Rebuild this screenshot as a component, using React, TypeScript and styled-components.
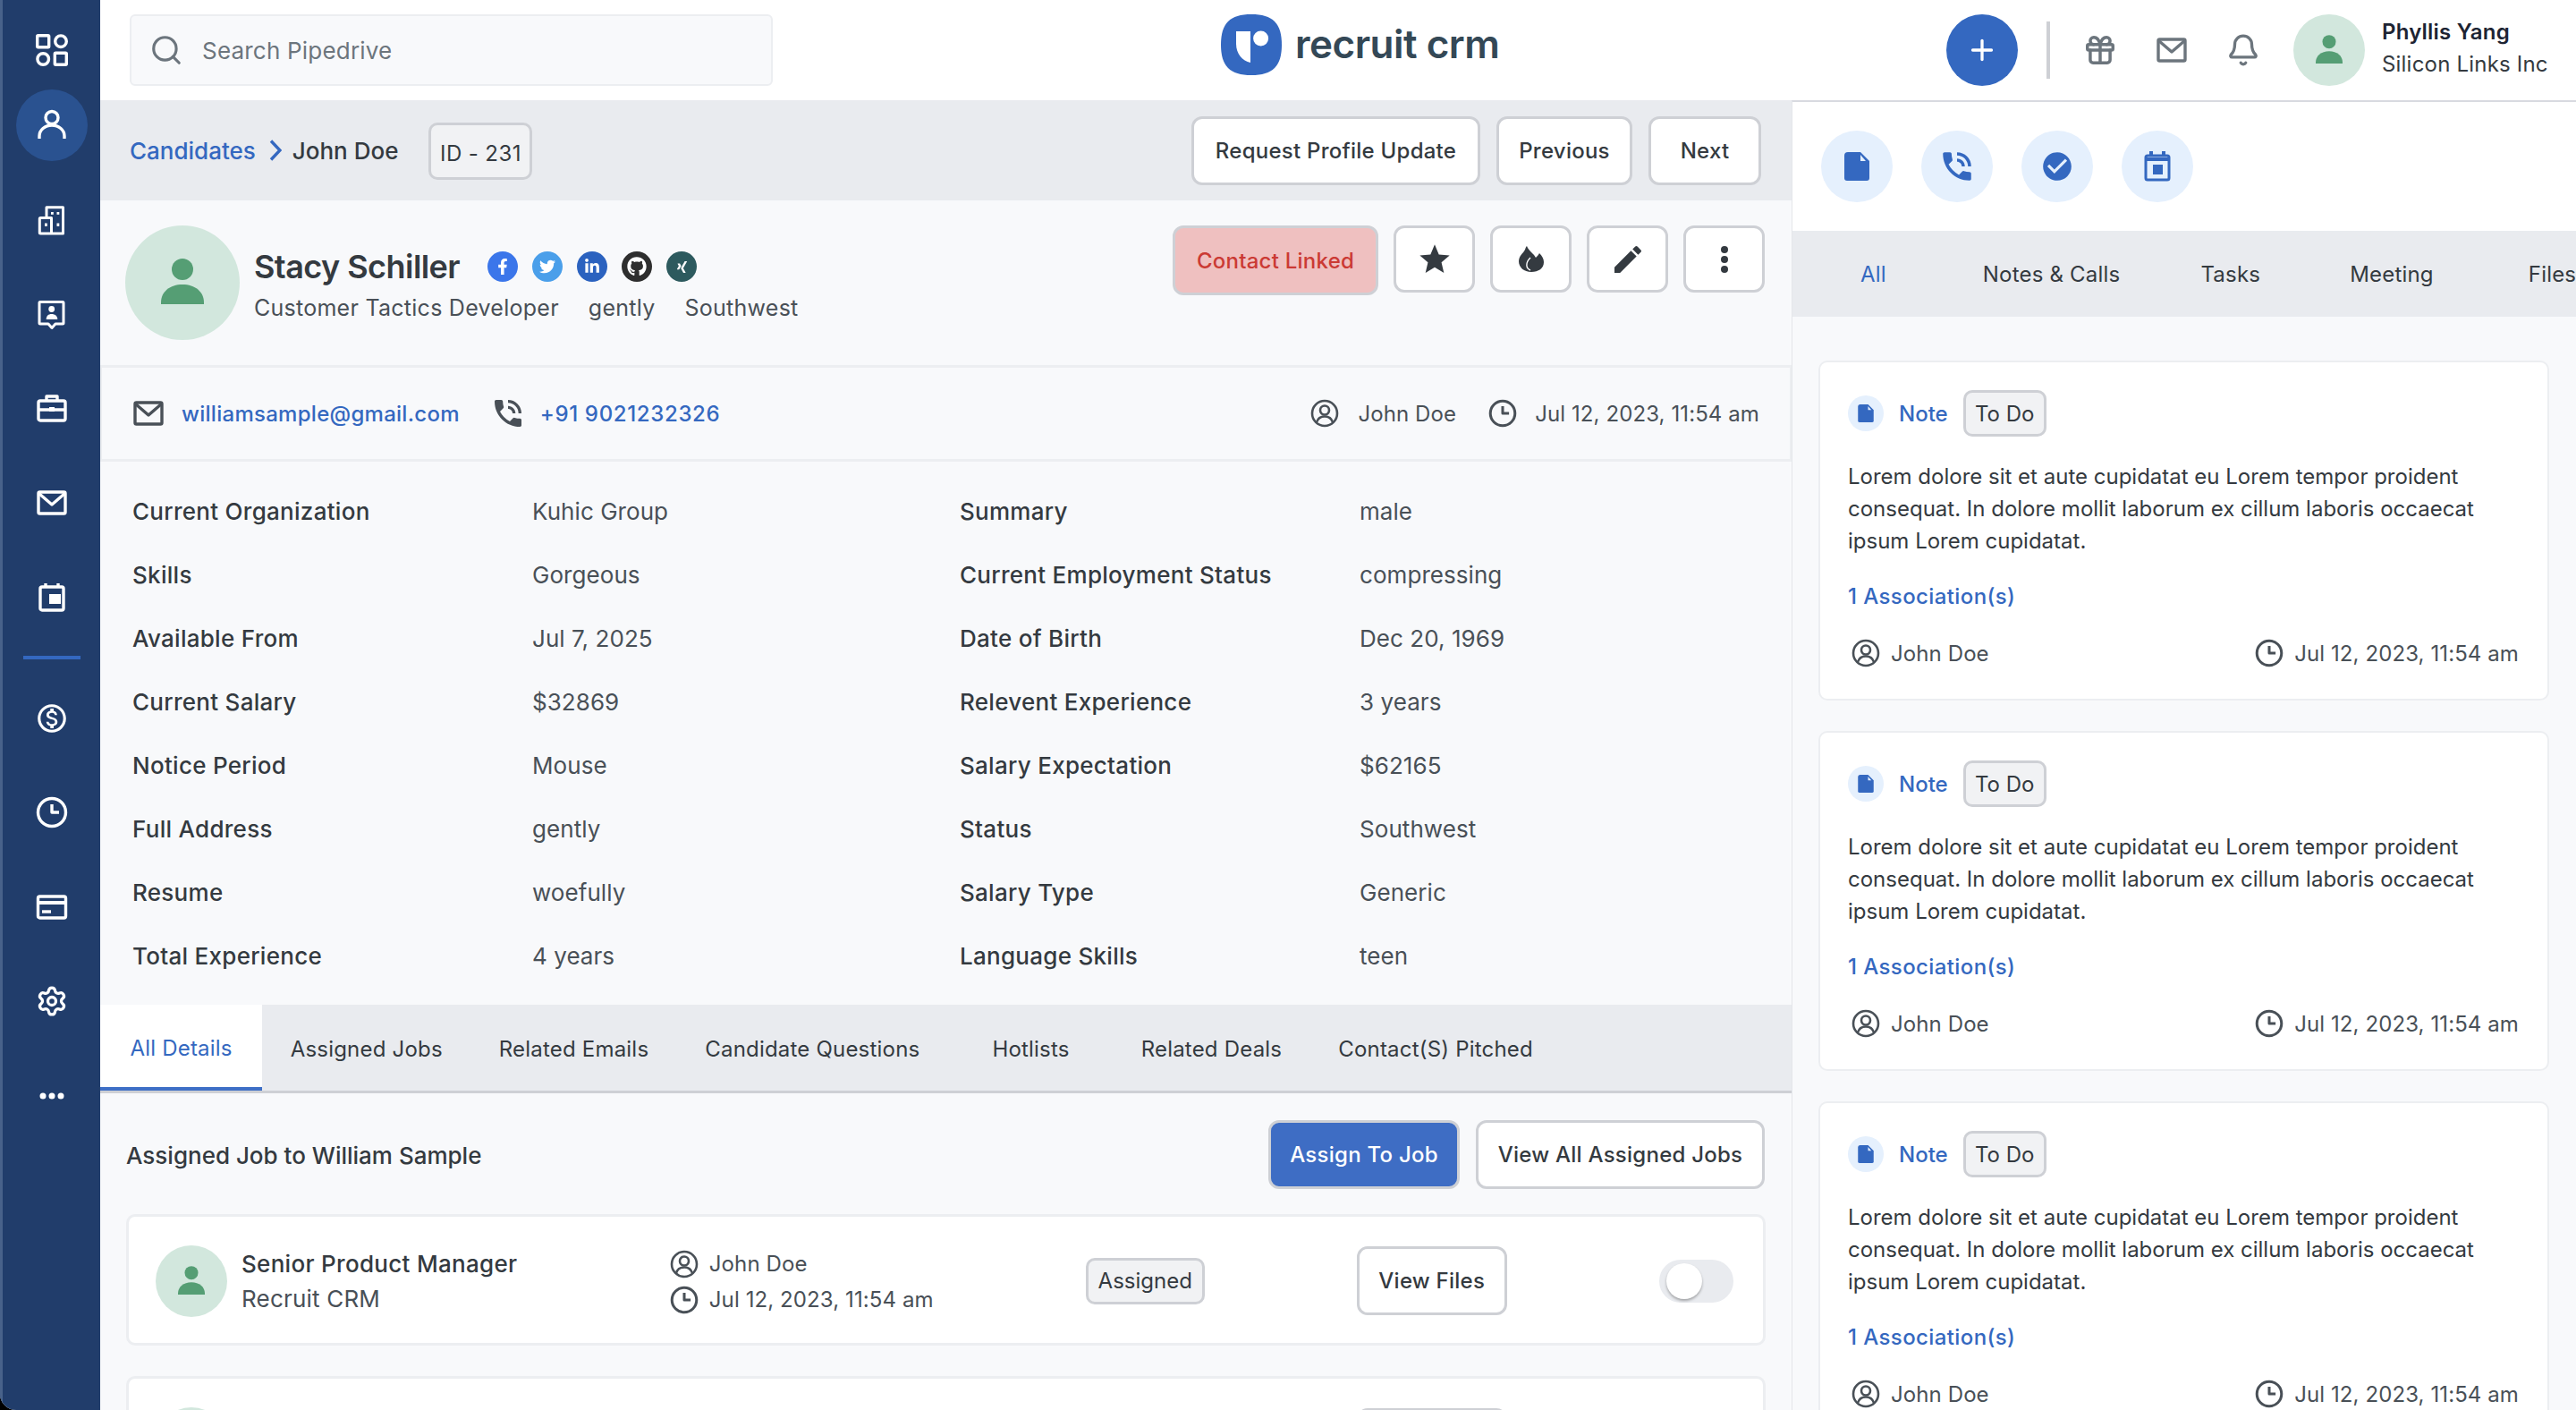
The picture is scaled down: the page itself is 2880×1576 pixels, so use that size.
import React from 'react';
import styled, { createGlobalStyle } from 'styled-components';
import { Search, Plus, Gift, Bell, Settings } from 'lucide-react';
import { FaFacebookF, FaTwitter, FaLinkedinIn, FaGithub, FaXing } from 'react-icons/fa';
import { MdPhoneInTalk, MdCheckCircle, MdOutlineMonetizationOn, MdStar, MdEdit } from 'react-icons/md';

const GlobalStyle = createGlobalStyle`
  html, body { margin: 0; padding: 0; background: #000; }
  * { box-sizing: border-box; }
  body { font-family: Inter, "Liberation Sans", sans-serif; color: #343a40; font-size: 24px; }
`;

const Page = styled.div`
  width: 2880px;
  height: 1576px;
  display: flex;
  overflow: hidden;
  background: #f8f9fb;
  border-bottom-left-radius: 18px;
`;

const Sidebar = styled.nav`
  width: 112px;
  flex-shrink: 0;
  padding-top: 16px;
  display: flex;
  flex-direction: column;
  align-items: center;
  gap: 25.5px;
  background: #213d6b;
  border-left: 3px solid #48628a;
  color: #fff;
`;

const NavItem = styled.div<{ $active?: boolean; $tight?: boolean }>`
  width: 80px;
  height: 80px;
  flex-shrink: 0;
  border-radius: 50%;
  display: flex;
  align-items: center;
  justify-content: center;
  background: ${(p) => (p.$active ? '#2a5290' : 'transparent')};
  margin-top: ${(p) => (p.$tight ? '-21.5px' : '0')};
`;

const NavDivider = styled.div`
  width: 64px;
  height: 4px;
  flex-shrink: 0;
  background: #3468c0;
`;

const Main = styled.div`
  flex: 1;
  min-width: 0;
  display: flex;
  flex-direction: column;
`;

const TopBar = styled.header`
  height: 112px;
  flex-shrink: 0;
  padding-left: 33px;
  display: flex;
  align-items: center;
  background: #fff;
`;

const SearchBox = styled.div`
  width: 719px;
  height: 80px;
  padding-left: 20px;
  display: flex;
  align-items: center;
  gap: 21px;
  background: #f8f9fb;
  border: 2px solid #eceef1;
  border-radius: 6px;
  color: #6c757d;
  font-size: 26px;
  letter-spacing: 0.2px;
`;

const Logo = styled.div`
  margin: 0 0 12px 501px;
  display: flex;
  align-items: center;
  gap: 15px;
`;

const LogoText = styled.span`
  margin-top: -2px;
  font-size: 44px;
  font-weight: 600;
  color: #344856;
  letter-spacing: -0.5px;
`;

const TopActions = styled.div`
  margin-left: auto;
  display: flex;
  align-items: center;
`;

const AddButton = styled.div`
  width: 80px;
  height: 80px;
  border-radius: 50%;
  background: #3468c0;
  color: #fff;
  display: flex;
  align-items: center;
  justify-content: center;
`;

const TopDivider = styled.div`
  width: 4px;
  height: 64px;
  margin: 0 16px 0 32px;
  background: #ced0d5;
`;

const TopIcon = styled.div`
  width: 80px;
  height: 80px;
  display: flex;
  align-items: center;
  justify-content: center;
  color: #6c757d;
`;

const UserBox = styled.div`
  margin-left: 16px;
  width: 316px;
  display: flex;
  align-items: center;
  gap: 19px;
`;

const UserText = styled.div`
  margin-top: -4px;
  display: flex;
  flex-direction: column;
  gap: 10px;
  line-height: 26px;
  letter-spacing: 0.2px;
`;

const UserName = styled.span`
  font-weight: 600;
  color: #1d2433;
`;

const AvatarCircle = styled.div<{ $size: number }>`
  width: ${(p) => p.$size}px;
  height: ${(p) => p.$size}px;
  flex-shrink: 0;
  border-radius: 50%;
  background: #d2e7dd;
`;

const Columns = styled.div`
  flex: 1;
  min-height: 0;
  display: flex;
`;

const LeftPanel = styled.section`
  width: 1891px;
  flex-shrink: 0;
  overflow: hidden;
  background: #f8f9fb;
`;

const CrumbBar = styled.div`
  height: 112px;
  padding: 0 33px;
  display: flex;
  align-items: center;
  background: #e9ebef;
`;

const Crumb = styled.a`
  color: #3468c0;
  font-weight: 500;
  font-size: 26px;
`;

const CrumbCurrent = styled.span`
  font-weight: 500;
  font-size: 26px;
`;

const CrumbChevron = styled.svg`
  margin: 0 12px 0 15px;
  color: #3468c0;
`;

const IdPill = styled.div`
  width: 116px;
  height: 64px;
  margin: 2px 0 0 34px;
  padding-top: 4px;
  display: flex;
  align-items: center;
  justify-content: center;
  border: 3px solid #ced0d5;
  border-radius: 10px;
  background: #f1f2f4;
  white-space: nowrap;
  letter-spacing: 0.4px;
`;

const CrumbActions = styled.div`
  margin-left: auto;
  margin-right: 1px;
  display: flex;
  gap: 18px;
`;

const Button = styled.button<{ $w: number; $h?: number; $primary?: boolean; $danger?: boolean }>`
  width: ${(p) => p.$w}px;
  height: ${(p) => p.$h ?? 77}px;
  flex-shrink: 0;
  padding: 0;
  display: flex;
  align-items: center;
  justify-content: center;
  font: 500 24px Inter, sans-serif;
  letter-spacing: 0.25px;
  border: 3px solid #ced0d5;
  border-radius: 12px;
  color: ${(p) => (p.$primary ? '#fff' : p.$danger ? '#cb3a34' : '#343a40')};
  background: ${(p) => (p.$primary ? '#3e6dc4' : p.$danger ? '#efc0c0' : '#fff')};
`;

const FilesButton = styled(Button)`
  margin-left: 170px;
`;

const ProfileRow = styled.div`
  height: 184px;
  padding: 28px 30px 0 28px;
  display: flex;
`;

const ProfileInfo = styled.div`
  margin-left: 16px;
  flex: 1;
`;

const NameLine = styled.div`
  height: 44px;
  margin-top: 24px;
  display: flex;
  align-items: center;
  gap: 16px;
`;

const Name = styled.h1`
  margin: 0 15px 0 0;
  font-size: 36px;
  font-weight: 600;
  letter-spacing: -0.55px;
`;

const Social = styled.span<{ $bg: string }>`
  width: 34px;
  height: 34px;
  border-radius: 50%;
  display: flex;
  align-items: center;
  justify-content: center;
  color: #fff;
  font-size: 18px;
  background: ${(p) => p.$bg};
`;

const SubLine = styled.div`
  margin-top: 9px;
  display: flex;
  gap: 33px;
  font-size: 25px;
  letter-spacing: 0.26px;
  color: #495057;
`;

const ProfileActions = styled.div`
  display: flex;
  align-items: flex-start;
  gap: 17px;
`;

const ContactRow = styled.div`
  height: 108px;
  padding: 0 34px 0 34px;
  display: flex;
  align-items: center;
  border: 3px solid #eceef1;
  border-right-width: 2px;
  border-left-width: 2px;
`;

const ContactItem = styled.div<{ $gap: number; $push?: boolean; $after?: number }>`
  display: flex;
  align-items: center;
  gap: ${(p) => p.$gap}px;
  margin-right: ${(p) => p.$after ?? 36}px;
  color: #495057;
  letter-spacing: 0.1px;
  margin-left: ${(p) => (p.$push ? 'auto' : '0')};
  &:last-child { margin-right: 0; }
`;

const ContactLink = styled.a<{ $tracking: number }>`
  color: #3468c0;
  font-weight: 500;
  letter-spacing: ${(p) => p.$tracking}px;
`;

const DetailGrid = styled.div`
  padding: 20px 0 19px 36px;
  display: grid;
  grid-template-columns: 447px 478px 447px 1fr;
  grid-auto-rows: 71px;
  align-items: center;
`;

const DetailLabel = styled.div`
  font-weight: 500;
  font-size: 26px;
  letter-spacing: 0.28px;
`;

const DetailValue = styled.div`
  color: #495057;
  font-size: 26px;
  letter-spacing: 0.06px;
`;

const TabBar = styled.div`
  height: 99px;
  display: flex;
  background: #e9ebef;
  border-bottom: 3px solid #ced0d5;
`;

const Tab = styled.div<{ $active?: boolean; $wide?: boolean }>`
  height: 96px;
  padding: ${(p) => (p.$active ? '4px 33.5px 0' : '2px 31.5px 0')};
  margin: ${(p) => (p.$wide ? '0 17px 0 18px' : '0')};
  display: flex;
  align-items: center;
  white-space: nowrap;
  font-size: 24px;
  letter-spacing: 0.2px;
  color: ${(p) => (p.$active ? '#3468c0' : '#343a40')};
  background: ${(p) => (p.$active ? '#fff' : 'transparent')};
  border-bottom: ${(p) => (p.$active ? '4px solid #3e6fc6' : 'none')};
`;

const SectionHead = styled.div`
  padding: 30px 30px 0 29px;
  display: flex;
  align-items: center;
`;

const SectionTitle = styled.div`
  font-weight: 500;
  font-size: 26px;
  margin-top: 1px;
`;

const SectionActions = styled.div`
  margin-left: auto;
  display: flex;
  gap: 18px;
`;

const JobCard = styled.div`
  height: 147px;
  margin: 28px 29px 34px 29px;
  padding: 2px 33px 0 30px;
  display: flex;
  align-items: center;
  background: #fff;
  border: 3px solid #eceef1;
  border-radius: 10px;
`;

const JobTitleBox = styled.div`
  width: 484px;
  margin-left: 16px;
  display: flex;
  flex-direction: column;
  gap: 12px;
  line-height: 27px;
`;

const JobTitle = styled.span`
  font-weight: 500;
  font-size: 26px;
  letter-spacing: 0.3px;
`;

const JobCompany = styled.span`
  color: #495057;
  font-size: 26px;
  letter-spacing: 0.2px;
`;

const JobMeta = styled.div`
  width: 470px;
  margin-top: 2px;
  display: flex;
  flex-direction: column;
  gap: 8px;
  color: #495057;
`;

const MetaLine = styled.div`
  display: flex;
  align-items: center;
  gap: 12px;
  letter-spacing: 0.1px;
`;

const StatusPill = styled.div<{ $w: number; $h: number }>`
  width: ${(p) => p.$w}px;
  height: ${(p) => p.$h}px;
  flex-shrink: 0;
  display: flex;
  align-items: center;
  justify-content: center;
  background: #f1f2f4;
  border: 3px solid #ced0d5;
  border-radius: 10px;
`;

const Toggle = styled.div`
  width: 84px;
  height: 48px;
  margin-left: 170px;
  padding: 4px 8px;
  border-radius: 24px;
  background: #e9ebef;
`;

const ToggleKnob = styled.div`
  width: 40px;
  height: 40px;
  border-radius: 50%;
  background: #fff;
  box-shadow: 0 2px 3px rgba(0, 0, 0, 0.3);
`;

const RightPanel = styled.aside`
  flex: 1;
  min-width: 0;
  overflow: hidden;
  border-top: 2px solid #d8dae0;
  border-left: 1px solid #e4e6ea;
  background: #f8f9fb;
`;

const QuickRow = styled.div`
  height: 144px;
  padding-left: 32px;
  display: flex;
  align-items: center;
  gap: 32px;
  background: #fff;
`;

const QuickIcon = styled.div<{ $size: number }>`
  width: ${(p) => p.$size}px;
  height: ${(p) => p.$size}px;
  flex-shrink: 0;
  border-radius: 50%;
  display: flex;
  align-items: center;
  justify-content: center;
  background: #e5f0fd;
  color: #3468c0;
`;

const ActivityTabs = styled.div`
  height: 96px;
  padding-left: 76px;
  display: flex;
  align-items: center;
  background: #e9ebef;
  white-space: nowrap;
  letter-spacing: 0.2px;
`;

const ActivityTab = styled.div<{ $right: number; $active?: boolean }>`
  margin-right: ${(p) => p.$right}px;
  color: ${(p) => (p.$active ? '#3468c0' : '#343a40')};
`;

const Feed = styled.div`
  padding: 49px 30px 0 29px;
  display: flex;
  flex-direction: column;
  gap: 34px;
`;

const NoteCard = styled.article`
  height: 380px;
  flex-shrink: 0;
  padding: 31px 32px 0 31px;
  background: #fff;
  border: 2px solid #eceef1;
  border-radius: 10px;
`;

const NoteHead = styled.div`
  display: flex;
  align-items: center;
`;

const NoteKind = styled.span`
  margin: 0 17px;
  color: #3468c0;
  font-weight: 500;
`;

const NoteBody = styled.p`
  margin: 27px 0 0;
  font-size: 24px;
  line-height: 36px;
  color: #343a40;
`;

const Association = styled.a`
  display: block;
  margin-top: 29px;
  color: #3468c0;
  font-weight: 500;
  letter-spacing: 0.4px;
`;

const NoteFoot = styled.div`
  margin-top: 33px;
  padding-left: 4px;
  display: flex;
  justify-content: space-between;
  color: #495057;
`;

const Glyph = ({ size = 36, children }: { size?: number; children: React.ReactNode }) => (
  <svg
    width={size}
    height={size}
    viewBox="0 0 36 36"
    fill="none"
    stroke="currentColor"
    strokeWidth="3.4"
    strokeLinejoin="round"
  >
    {children}
  </svg>
);

const GridIcon = () => (
  <Glyph>
    <rect x="1.7" y="1.7" width="13" height="13" rx="1" />
    <circle cx="28" cy="8.2" r="6.3" />
    <circle cx="8.2" cy="28" r="6.3" />
    <rect x="21.3" y="21.3" width="13" height="13" rx="1" />
  </Glyph>
);

const PersonIcon = () => (
  <Glyph>
    <circle cx="18" cy="9.5" r="7" />
    <path d="M4 33v-3a14 12 0 0 1 28 0v3" />
  </Glyph>
);

const BuildingIcon = () => (
  <svg width="36" height="36" viewBox="0 0 36 36" fill="none" stroke="currentColor" strokeWidth="3" strokeLinejoin="round">
    <path d="M12 15V3.7h18.5V33H5.3a1 1 0 0 1-1-1V16.5a1 1 0 0 1 1-1h12.2V33" />
    <g fill="currentColor" stroke="none">
      <rect x="17" y="9" width="2.8" height="2.8" />
      <rect x="23.5" y="9" width="2.8" height="2.8" />
      <rect x="23.5" y="21.5" width="2.8" height="3.4" />
      <rect x="10" y="21.5" width="2.8" height="3.4" />
    </g>
  </svg>
);

const ContactIcon = () => (
  <svg width="36" height="36" viewBox="0 0 36 36" fill="none" stroke="currentColor" strokeWidth="3" strokeLinejoin="round">
    <path d="M5 4.5h25a1 1 0 0 1 1 1V28a1 1 0 0 1-1 1h-8l-4 4.5L14 29H5a1 1 0 0 1-1-1V5.5a1 1 0 0 1 1-1z" />
    <circle cx="17.7" cy="12.5" r="3.4" fill="currentColor" stroke="none" />
    <path d="M11.7 24c0-4 2.5-6 6-6s6.6 2 6.6 6z" fill="currentColor" stroke="none" />
  </svg>
);

const BriefcaseIcon = () => (
  <Glyph>
    <rect x="3" y="9" width="30" height="22" rx="2" />
    <path d="M12 9V4h12v5M3 19h30" />
    <rect x="15" y="16" width="6" height="5" fill="currentColor" stroke="none" />
  </Glyph>
);

const MailIcon = ({ size = 36 }: { size?: number }) => (
  <Glyph size={size}>
    <rect x="3" y="6" width="30" height="24" rx="1.5" />
    <path d="M3.5 7.5 18 20 32.5 7.5" />
  </Glyph>
);

const CalendarIcon = () => (
  <Glyph>
    <rect x="5" y="6" width="26" height="26" rx="2" />
    <path d="M11 2v4M25 2v4" />
    <rect x="15" y="14" width="13" height="11" fill="currentColor" stroke="none" />
  </Glyph>
);

const ClockIcon = ({ size = 36 }: { size?: number }) => (
  <Glyph size={size}>
    <circle cx="18" cy="18" r="15.5" />
    <path d="M18 9v9h8" />
  </Glyph>
);

const CardIcon = () => (
  <Glyph>
    <rect x="2.5" y="6" width="31" height="24" rx="2" />
    <rect x="2.5" y="11" width="31" height="4" fill="currentColor" stroke="none" />
    <path d="M7 23h10" />
  </Glyph>
);

const DotsIcon = () => (
  <svg width="36" height="36" viewBox="0 0 36 36" fill="currentColor">
    <circle cx="8" cy="18" r="3.5" />
    <circle cx="18" cy="18" r="3.5" />
    <circle cx="28" cy="18" r="3.5" />
  </svg>
);

const DotsVertical = () => (
  <svg width="10" height="30" viewBox="0 0 10 30" fill="currentColor">
    <circle cx="5" cy="4" r="4" />
    <circle cx="5" cy="15" r="4" />
    <circle cx="5" cy="26" r="4" />
  </svg>
);

const FireIcon = () => (
  <svg width="28" height="29" viewBox="0 0 28 29">
    <path
      d="M14 29C6 29 0 24 0 17 0 11 5 8 7 4c.5-1.500 1-3 2-4 1 3 4 6 7 9 1.500 1.500 2.500 3 3 4 1-1 3-3 4-5 3 3 5 6 5 10 0 7-6 11-14 11z"
      fill="currentColor"
    />
    <path d="M13 27c-5-2-6-8 0-14" fill="none" stroke="#fff" strokeWidth="1.4" />
  </svg>
);

const OwnerIcon = ({ size = 32 }: { size?: number }) => (
  <svg width={size} height={size} viewBox="0 0 32 32" fill="none" stroke="#495057" strokeWidth="2.6">
    <circle cx="16" cy="16" r="14" />
    <circle cx="16" cy="12.5" r="5" />
    <path d="M7 26c1.5-5 5-6.5 9-6.5s7.5 1.5 9 6.5" />
  </svg>
);

const DocIcon = ({ size = 32 }: { size?: number }) => (
  <svg width={size} height={size} viewBox="0 0 32 32" fill="currentColor">
    <path d="M6 0h14l10 10v19a3 3 0 0 1-3 3H5a3 3 0 0 1-3-3V4a4 4 0 0 1 4-4z" />
    <path d="M20 3v7h6z" fill="#e5f0fd" />
  </svg>
);

const BlueCalendar = () => (
  <svg width="32" height="34" viewBox="0 0 32 34" fill="none" stroke="currentColor" strokeWidth="3">
    <rect x="3" y="5" width="26" height="27" rx="2" />
    <path d="M3 9h26M9 0v6M23 0v6" strokeWidth="4" />
    <rect x="11" y="15" width="11" height="11" fill="currentColor" stroke="none" />
  </svg>
);

const AvatarImage = ({ size }: { size: number }) => (
  <AvatarCircle $size={size}>
    <svg width={size} height={size} viewBox="0 0 128 128" fill="#559e74">
      <ellipse cx="64" cy="49" rx="12" ry="12" />
      <path d="M40 88v-2c0-12 10-20 24-20s24 8 24 20v2z" />
    </svg>
  </AvatarCircle>
);

const LogoMark = () => (
  <svg width="68" height="68" viewBox="0 0 68 68">
    <path d="M34 0C58 0 68 10 68 34S58 68 34 68 0 58 0 34 10 0 34 0z" fill="#3468c0" />
    <path d="M17 19h16v35C24 52 17 44 17 33z" fill="#fff" />
    <circle cx="44.600" cy="27" r="8.500" fill="#fff" />
  </svg>
);

const details = [
  ['Current Organization', 'Kuhic Group', 'Summary', 'male'],
  ['Skills', 'Gorgeous', 'Current Employment Status', 'compressing'],
  ['Available From', 'Jul 7, 2025', 'Date of Birth', 'Dec 20, 1969'],
  ['Current Salary', '$32869', 'Relevent Experience', '3 years'],
  ['Notice Period', 'Mouse', 'Salary Expectation', '$62165'],
  ['Full Address', 'gently', 'Status', 'Southwest'],
  ['Resume', 'woefully', 'Salary Type', 'Generic'],
  ['Total Experience', '4 years', 'Language Skills', 'teen'],
];

const tabs = ['Assigned Jobs', 'Related Emails', 'Candidate Questions', 'Hotlists', 'Related Deals', 'Contact(S) Pitched'];

const App = () => (
  <Page>
    <GlobalStyle />
    <Sidebar>
      <NavItem><GridIcon /></NavItem>
      <NavItem $active $tight><PersonIcon /></NavItem>
      <NavItem><BuildingIcon /></NavItem>
      <NavItem><ContactIcon /></NavItem>
      <NavItem><BriefcaseIcon /></NavItem>
      <NavItem><MailIcon /></NavItem>
      <NavItem><CalendarIcon /></NavItem>
      <NavDivider />
      <NavItem><MdOutlineMonetizationOn size={38} /></NavItem>
      <NavItem><ClockIcon /></NavItem>
      <NavItem><CardIcon /></NavItem>
      <NavItem><Settings size={36} strokeWidth={2.2} /></NavItem>
      <NavItem><DotsIcon /></NavItem>
    </Sidebar>
    <Main>
      <TopBar>
        <SearchBox>
          <Search size={38} strokeWidth={2} />
          Search Pipedrive
        </SearchBox>
        <Logo>
          <LogoMark />
          <LogoText>recruit crm</LogoText>
        </Logo>
        <TopActions>
          <AddButton><Plus size={36} strokeWidth={2.2} /></AddButton>
          <TopDivider />
          <TopIcon><Gift size={38} strokeWidth={2.2} /></TopIcon>
          <TopIcon><MailIcon size={36} /></TopIcon>
          <TopIcon><Bell size={38} strokeWidth={2.1} /></TopIcon>
          <UserBox>
            <AvatarImage size={80} />
            <UserText>
              <UserName>Phyllis Yang</UserName>
              <span>Silicon Links Inc</span>
            </UserText>
          </UserBox>
        </TopActions>
      </TopBar>
      <Columns>
        <LeftPanel>
          <CrumbBar>
            <Crumb>Candidates</Crumb>
            <CrumbChevron width="14" height="24" viewBox="0 0 14 24" fill="none" stroke="currentColor" strokeWidth="3.4">
              <path d="M2 1.5 12 12 2 22.5" />
            </CrumbChevron>
            <CrumbCurrent>John Doe</CrumbCurrent>
            <IdPill>ID - 231</IdPill>
            <CrumbActions>
              <Button $w={323}>Request Profile Update</Button>
              <Button $w={152}>Previous</Button>
              <Button $w={126}>Next</Button>
            </CrumbActions>
          </CrumbBar>
          <ProfileRow>
            <AvatarImage size={128} />
            <ProfileInfo>
              <NameLine>
                <Name>Stacy Schiller</Name>
                <Social $bg="#3b76ea"><FaFacebookF /></Social>
                <Social $bg="#4a9fea"><FaTwitter /></Social>
                <Social $bg="#2b62bf"><FaLinkedinIn /></Social>
                <Social $bg="#2e2e2e"><FaGithub size={22} /></Social>
                <Social $bg="#2d5a5e"><FaXing size={15} /></Social>
              </NameLine>
              <SubLine>
                <span>Customer Tactics Developer</span>
                <span>gently</span>
                <span>Southwest</span>
              </SubLine>
            </ProfileInfo>
            <ProfileActions>
              <Button $w={230} $h={78} $danger>Contact Linked</Button>
              <Button $w={91} $h={75}><MdStar size={40} /></Button>
              <Button $w={91} $h={75}><FireIcon /></Button>
              <Button $w={91} $h={75}><MdEdit size={40} /></Button>
              <Button $w={91} $h={75}><DotsVertical /></Button>
            </ProfileActions>
          </ProfileRow>
          <ContactRow>
            <ContactItem $gap={19} $after={34}>
              <MailIcon />
              <ContactLink $tracking={0.28}>williamsample@gmail.com</ContactLink>
            </ContactItem>
            <ContactItem $gap={16}>
              <MdPhoneInTalk size={40} />
              <ContactLink $tracking={0.65}>+91 9021232326</ContactLink>
            </ContactItem>
            <ContactItem $gap={21} $push>
              <OwnerIcon />
              John Doe
            </ContactItem>
            <ContactItem $gap={20}>
              <ClockIcon size={32} />
              Jul 12, 2023, 11:54 am
            </ContactItem>
          </ContactRow>
          <DetailGrid>
            {details.map((row) => (
              <React.Fragment key={row[0]}>
                <DetailLabel>{row[0]}</DetailLabel>
                <DetailValue>{row[1]}</DetailValue>
                <DetailLabel>{row[2]}</DetailLabel>
                <DetailValue>{row[3]}</DetailValue>
              </React.Fragment>
            ))}
          </DetailGrid>
          <TabBar>
            <Tab $active>All Details</Tab>
            {tabs.map((t) => (
              <Tab key={t} $wide={t === 'Hotlists'}>{t}</Tab>
            ))}
          </TabBar>
          <SectionHead>
            <SectionTitle>Assigned Job to William Sample</SectionTitle>
            <SectionActions>
              <Button $w={214} $h={77} $primary>Assign To Job</Button>
              <Button $w={323} $h={77}>View All Assigned Jobs</Button>
            </SectionActions>
          </SectionHead>
          <JobCard>
            <AvatarImage size={80} />
            <JobTitleBox>
              <JobTitle>Senior Product Manager</JobTitle>
              <JobCompany>Recruit CRM</JobCompany>
            </JobTitleBox>
            <JobMeta>
              <MetaLine><OwnerIcon />John Doe</MetaLine>
              <MetaLine><ClockIcon size={32} />Jul 12, 2023, 11:54 am</MetaLine>
            </JobMeta>
            <StatusPill $w={133} $h={52}>Assigned</StatusPill>
            <FilesButton $w={168} $h={77}>View Files</FilesButton>
            <Toggle><ToggleKnob /></Toggle>
          </JobCard>
          <JobCard>
            <AvatarImage size={80} />
            <JobTitleBox />
            <JobMeta />
            <StatusPill $w={133} $h={52} />
            <FilesButton $w={168} $h={77} />
            <Toggle><ToggleKnob /></Toggle>
          </JobCard>
        </LeftPanel>
        <RightPanel>
          <QuickRow>
            <QuickIcon $size={80}><DocIcon /></QuickIcon>
            <QuickIcon $size={80}><MdPhoneInTalk size={42} /></QuickIcon>
            <QuickIcon $size={80}><MdCheckCircle size={38} /></QuickIcon>
            <QuickIcon $size={80}><BlueCalendar /></QuickIcon>
          </QuickRow>
          <ActivityTabs>
            <ActivityTab $right={108} $active>All</ActivityTab>
            <ActivityTab $right={90}>Notes &amp; Calls</ActivityTab>
            <ActivityTab $right={100}>Tasks</ActivityTab>
            <ActivityTab $right={106}>Meeting</ActivityTab>
            <ActivityTab $right={0}>Files</ActivityTab>
          </ActivityTabs>
          <Feed>
            {[0, 1, 2].map((i) => (
              <NoteCard key={i}>
                <NoteHead>
                  <QuickIcon $size={40}><DocIcon size={20} /></QuickIcon>
                  <NoteKind>Note</NoteKind>
                  <StatusPill $w={93} $h={52}>To Do</StatusPill>
                </NoteHead>
                <NoteBody>
                  Lorem dolore sit et aute cupidatat eu Lorem tempor proident consequat. In dolore mollit laborum ex cillum laboris occaecat ipsum Lorem cupidatat.
                </NoteBody>
                <Association>1 Association(s)</Association>
                <NoteFoot>
                  <MetaLine><OwnerIcon />John Doe</MetaLine>
                  <MetaLine><ClockIcon size={32} />Jul 12, 2023, 11:54 am</MetaLine>
                </NoteFoot>
              </NoteCard>
            ))}
          </Feed>
        </RightPanel>
      </Columns>
    </Main>
  </Page>
);

export default App;
